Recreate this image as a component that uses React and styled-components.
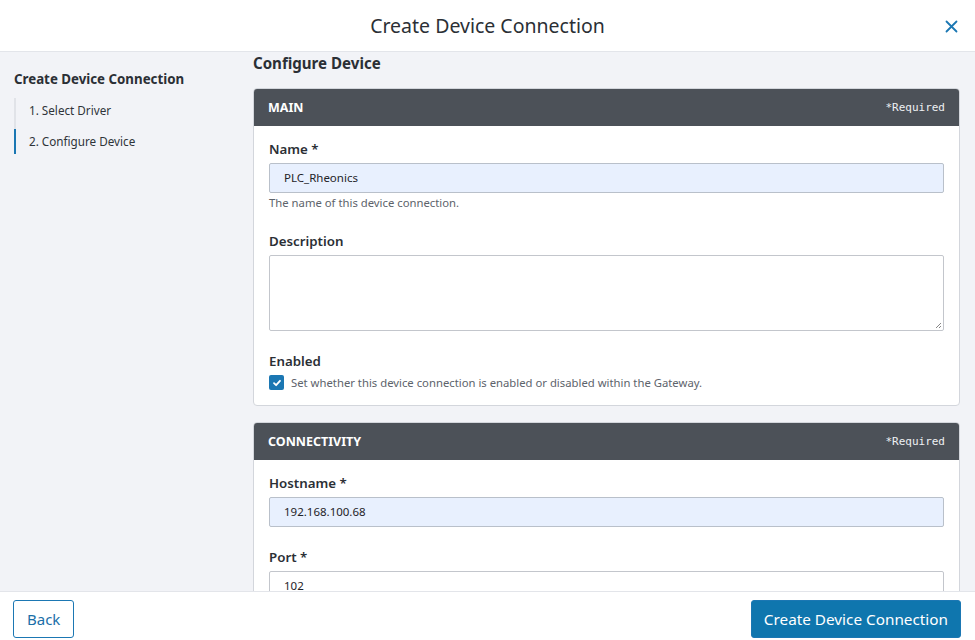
import React from "react";
import styled, { createGlobalStyle } from "styled-components";

const Global = createGlobalStyle`
  html, body { margin: 0; padding: 0; }
  body { font-family: "Noto Sans", "Open Sans", sans-serif; color: #2b2f35; }
  * { box-sizing: border-box; }
`;

const Shell = styled.div`
  height: 640px;
  display: flex;
  flex-direction: column;
  background: #f2f3f7;
  overflow: hidden;
`;

const Header = styled.header`
  height: 52px;
  flex: none;
  background: #fff;
  border-bottom: 1px solid #e3e5ea;
  display: flex;
  align-items: center;
  justify-content: center;
  position: relative;
`;

const Title = styled.h1`
  margin: 0;
  font-size: 19.5px;
  font-weight: 400;
  color: #2b2f35;
`;

const Close = styled.button`
  position: absolute;
  right: 14px;
  top: 16px;
  width: 20px;
  height: 20px;
  border: none;
  background: none;
  padding: 0;
  display: flex;
  align-items: center;
  justify-content: center;
  cursor: pointer;
`;

const Body = styled.div`
  flex: 1;
  display: flex;
  min-height: 0;
  overflow: hidden;
`;

const Sidebar = styled.nav`
  width: 253px;
  flex: none;
  padding: 17px 0 0 14px;
`;

const SideTitle = styled.div`
  font-size: 13.3px;
  font-weight: 700;
  line-height: 20px;
  color: #2b2f35;
`;

const Steps = styled.ol`
  list-style: none;
  margin: 9px 0 0;
  padding: 0;
  border-left: 2px solid #e1e3e8;
`;

const Step = styled.li`
  font-size: 11.7px;
  line-height: 19px;
  padding: 3px 0 3px 13px;
  margin: 0 0 6px -2px;
  color: #2f3339;
  border-left: 2px solid ${(p) => (p.$active ? "#1b77b3" : "transparent")};
  &:last-child { margin-bottom: 0; }
`;

const Main = styled.main`
  flex: 1;
  padding: 0 15px 0 0;
  overflow: hidden;
`;

const PageTitle = styled.h2`
  margin: 0 0 14px;
  font-size: 15.1px;
  font-weight: 700;
  line-height: 22px;
  color: #2b2f35;
`;

const Card = styled.section`
  background: #fff;
  border: 1px solid #d3d6dc;
  border-radius: 4px;
  margin-bottom: 16px;
  overflow: hidden;
`;

const CardHead = styled.div`
  height: 38px;
  background: #4c5158;
  margin: -1px -1px 0;
  border-radius: 4px 4px 0 0;
  display: flex;
  align-items: center;
  justify-content: space-between;
  padding: 0 15px 0 15px;
`;

const CardTitle = styled.span`
  font-size: 12.5px;
  font-weight: 700;
  color: #fff;
`;

const Required = styled.span`
  font-family: "DejaVu Sans Mono", "Liberation Mono", monospace;
  font-size: 11px;
  color: #eef0f3;
`;

const CardBody = styled.div`
  padding: 13px 15px 15px;
`;

const Field = styled.div`
  margin-bottom: 20px;
  &:last-child { margin-bottom: 0; }
`;

const Label = styled.label`
  display: block;
  font-size: 13.3px;
  font-weight: 600;
  line-height: 20px;
  margin-bottom: 4px;
  color: #2b2f35;
`;

const Input = styled.div`
  height: 30px;
  border: 1px solid ${(p) => (p.$filled ? "#b9c0ca" : "#c3c6cc")};
  border-radius: 2px;
  background: ${(p) => (p.$filled ? "#e8f0fe" : "#fff")};
  font-size: 11.5px;
  line-height: 28px;
  padding: 0 14px;
  color: #1f2328;
`;

const TextArea = styled.div`
  height: 76px;
  border: 1px solid #c3c6cc;
  border-radius: 2px;
  background: #fff;
  position: relative;
`;

const Grip = styled.svg`
  position: absolute;
  right: 1px;
  bottom: 1px;
`;

const Help = styled.div`
  font-size: 11.3px;
  line-height: 16px;
  margin-top: 2px;
  color: #5d636b;
`;

const CheckRow = styled.div`
  display: flex;
  align-items: center;
  gap: 7px;
  margin-top: 1px;
`;

const Box = styled.span`
  width: 15px;
  height: 15px;
  border-radius: 2px;
  background: #1b77b3;
  display: flex;
  align-items: center;
  justify-content: center;
  flex: none;
`;

const CheckText = styled.span`
  font-size: 11.3px;
  color: #5d636b;
`;

const Footer = styled.footer`
  height: 49px;
  flex: none;
  background: #fff;
  border-top: 1px solid #e3e5ea;
  display: flex;
  align-items: flex-end;
  justify-content: space-between;
  padding: 0 14px 2px 13px;
`;

const Button = styled.button`
  height: 38px;
  padding: 0 ${(p) => (p.$primary ? "12px" : "13px")};
  border-radius: 3px;
  border: 1px solid #1b77b3;
  background: ${(p) => (p.$primary ? "#0f76ae" : "#fff")};
  color: ${(p) => (p.$primary ? "#fff" : "#1b6fa8")};
  font-family: "Noto Sans", "Open Sans", sans-serif;
  font-size: ${(p) => (p.$primary ? "15.3px" : "15px")};
  cursor: pointer;
`;

export default function App() {
  return (
    <Shell>
      <Global />
      <Header>
        <Title>Create Device Connection</Title>
        <Close aria-label="close">
          <svg width="13" height="13" viewBox="0 0 13 13">
            <path d="M1.5 1.5 L11.5 11.5 M11.5 1.5 L1.5 11.5" stroke="#1b77b3" strokeWidth="1.8" strokeLinecap="round" />
          </svg>
        </Close>
      </Header>
      <Body>
        <Sidebar>
          <SideTitle>Create Device Connection</SideTitle>
          <Steps>
            <Step>1. Select Driver</Step>
            <Step $active>2. Configure Device</Step>
          </Steps>
        </Sidebar>
        <Main>
          <PageTitle>Configure Device</PageTitle>
          <Card>
            <CardHead>
              <CardTitle>MAIN</CardTitle>
              <Required>*Required</Required>
            </CardHead>
            <CardBody>
              <Field>
                <Label>Name *</Label>
                <Input $filled>PLC_Rheonics</Input>
                <Help>The name of this device connection.</Help>
              </Field>
              <Field>
                <Label>Description</Label>
                <TextArea>
                  <Grip width="8" height="8" viewBox="0 0 8 8">
                    <path d="M7 2 L2 7 M7 5 L5 7" stroke="#888" strokeWidth="1" />
                  </Grip>
                </TextArea>
              </Field>
              <Field>
                <Label>Enabled</Label>
                <CheckRow>
                  <Box>
                    <svg width="10" height="10" viewBox="0 0 10 10">
                      <path d="M2 5.2 L4.1 7.2 L8 2.8" fill="none" stroke="#fff" strokeWidth="1.8" strokeLinecap="round" strokeLinejoin="round" />
                    </svg>
                  </Box>
                  <CheckText>Set whether this device connection is enabled or disabled within the Gateway.</CheckText>
                </CheckRow>
              </Field>
            </CardBody>
          </Card>
          <Card>
            <CardHead>
              <CardTitle>CONNECTIVITY</CardTitle>
              <Required>*Required</Required>
            </CardHead>
            <CardBody>
              <Field>
                <Label>Hostname *</Label>
                <Input $filled>192.168.100.68</Input>
              </Field>
              <Field>
                <Label>Port *</Label>
                <Input>102</Input>
              </Field>
            </CardBody>
          </Card>
        </Main>
      </Body>
      <Footer>
        <Button>Back</Button>
        <Button $primary>Create Device Connection</Button>
      </Footer>
    </Shell>
  );
}
